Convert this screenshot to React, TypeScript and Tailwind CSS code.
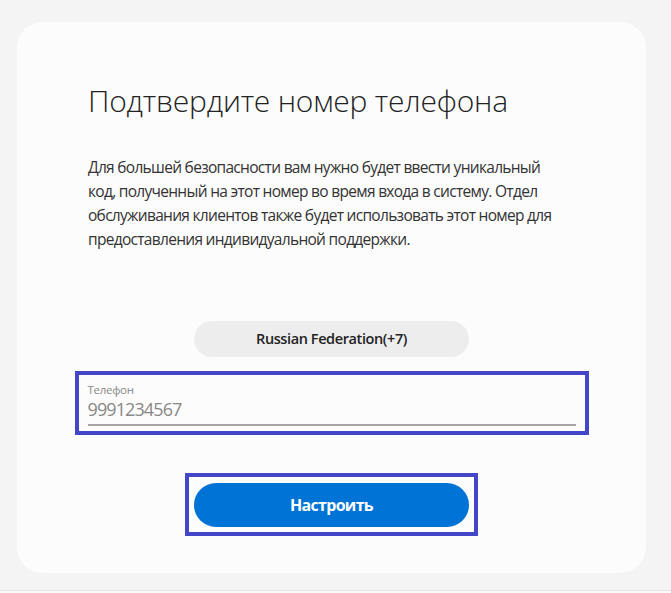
import React from "react";

export default function App() {
  return (
    <div className="w-[671px] h-[593px] bg-[#f4f4f4] flex flex-col overflow-hidden" style={{ fontFamily: '"Open Sans", "Noto Sans", sans-serif' }}>
      <div className="ml-[17px] mt-[22px] w-[629px] h-[551px] rounded-[26px] bg-[#fcfcfc] flex flex-col">
        <h1 className="ml-[71px] mt-[59px] text-[30px] leading-[40px] font-light text-[#222] tracking-[-0.2px]">
          Подтвердите номер телефона
        </h1>
        <p className="ml-[71px] mt-[34px] text-[15.5px] leading-[24px] text-[#333] tracking-[-0.7px]">
          Для большей безопасности вам нужно будет ввести уникальный
          <br />
          код, полученный на этот номер во время входа в систему. Отдел
          <br />
          обслуживания клиентов также будет использовать этот номер для
          <br />
          предоставления индивидуальной поддержки.
        </p>
        <div className="self-center mt-[70px] w-[275px] h-[36px] rounded-full bg-[#ededed] flex items-center justify-center text-[14.5px] font-semibold text-[#222] tracking-[-0.4px]">
          Russian Federation(+7)
        </div>
        <div className="self-center mt-[14px] w-[514px] h-[64px] border-4 border-[#4346c6] px-[9px] pt-[8px] flex flex-col">
          <span className="text-[11.5px] leading-[14px] text-[#888] tracking-[-0.3px]">Телефон</span>
          <span className="text-[18px] leading-[24px] text-[#888] tracking-[-0.9px]">9991234567</span>
          <div className="mt-[3px] h-[2px] bg-[#a6a6a6]" />
        </div>
        <div className="self-center mt-[38px] w-[293px] h-[63px] border-4 border-[#4346c6] px-[5px] pt-[6px]">
          <button className="w-full h-[44px] rounded-full bg-[#0073d6] text-white text-[16px] font-bold tracking-[-0.7px]">
            Настроить
          </button>
        </div>
      </div>
      <div className="mt-[17px] h-[1px] bg-[#e4e4e4]" />
      <div className="flex-1 bg-[#f9f9f9]" />
    </div>
  );
}
